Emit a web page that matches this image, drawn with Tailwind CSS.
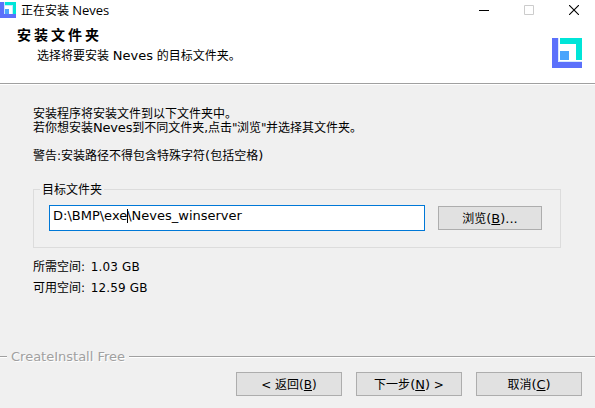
<!DOCTYPE html>
<html lang="zh-CN">
<head>
<meta charset="utf-8">
<title>正在安装 Neves</title>
<script src="https://cdn.jsdelivr.net/npm/@tailwindcss/browser@4"></script>
</head>
<body class="w-[595px] h-[408px] overflow-hidden bg-[#f0f0f0] text-black text-[12px] leading-[14px] font-['DejaVu_Sans','Noto_Sans_CJK_SC',sans-serif] whitespace-nowrap">
<div class="flex flex-col h-[408px]">
  <header class="h-[85px] bg-white border-b border-white flex flex-col">
    <div class="h-[83px] shrink-0">
      <div class="h-5 flex items-start">
        <svg class="w-4 h-4 mt-[2px] shrink-0" viewBox="0 0 16 16"><path fill="#c9e6fb" d="M3 0h10v13H3z"/><path fill="#fff" d="M5 4h7v8H5z"/><path fill="#5b70fb" d="M0 0h4v12h12v4H0z"/><path fill="#00e5d8" d="M5 0h11v12h-3V3H5z"/><path fill="#4ca4fc" d="M5 7h4v5H5z"/></svg>
        <span class="ml-[5px] mt-[3px] font-['Open_Sans','Noto_Sans_CJK_SC',sans-serif]">正在安装 <span class="text-[13px]">Neves</span></span>
        <div class="ml-auto flex mr-[16px] mt-[5px] gap-[35px]">
          <svg class="w-[10px] h-[10px]" viewBox="0 0 10 10"><path d="M0 5.5h10" stroke="#000"/></svg>
          <svg class="w-[10px] h-[10px]" viewBox="0 0 10 10"><path d="M.5.5h9v9h-9z" fill="none" stroke="#ccc"/></svg>
          <svg class="w-[10px] h-[10px]" viewBox="0 0 10 10"><path d="M0 0l10 10M10 0L0 10" stroke="#000" stroke-width="1.1"/></svg>
        </div>
      </div>
      <div class="flex justify-between">
        <div class="pl-[17px] pt-[7px]">
          <h1 class="text-[14px] leading-4 font-bold tracking-[3px]">安装文件夹</h1>
          <p class="pl-5 mt-[6px]">选择将要安装 <span class="text-[13px]">Neves</span> 的目标文件夹。</p>
        </div>
        <svg class="w-[30px] h-[30px] mt-[18px] mr-[13px]" viewBox="0 0 30 30"><path fill="#5b70fb" d="M0 0h6v24h24v6H0z"/><path fill="#00e5d8" d="M8 0h22v22h-6V6H8z"/><path fill="#4ca4fc" d="M8 13h9v9H8z"/><path fill="none" stroke="#d5e8ff" d="M6.5 0v23.5H30"/></svg>
      </div>
    </div>
    <div class="h-px bg-[#a0a0a0]"></div>
  </header>
  <main class="h-[271px] pt-[22px] pl-[33px]">
    <p>安装程序将安装文件到以下文件夹中。</p>
    <p>若你想安装<span class="text-[13px] -tracking-[0.2px]">Neves</span>到不同文件夹,点击<span class="-tracking-[0.6px]">"</span>浏览<span class="-tracking-[0.6px]">"</span>并选择其文件夹。</p>
    <p class="mt-[14px]">警告:安装路径不得包含特殊字符<span class="text-[13px]">(</span>包括空格<span class="text-[13px]">)</span></p>
    <fieldset class="w-[528px] h-[65px] mt-[20px] flex flex-col">
      <div class="flex h-[14px] items-start">
        <div class="w-[7px] h-px mt-[6px] bg-[#dcdcdc]"></div>
        <span class="w-[64px] pl-[2px]">目标文件夹</span>
        <div class="grow h-px mt-[6px] bg-[#dcdcdc]"></div>
      </div>
      <div class="-mt-[8px] h-[59px] border border-t-0 border-[#dcdcdc] flex pt-[16px] pl-[15px] items-start">
        <div class="w-[376px] h-[26px] bg-white border border-[#0078d7] pl-[3px] pt-[3px] flex text-[13px]">D:\BMP\exe<span class="w-px h-[14px] bg-black -mr-px"></span>\Neves_winserver</div>
        <button class="ml-[13px] mt-px w-[104px] h-6 bg-[#e1e1e1] border border-[#adadad] pt-px">浏览<span class="text-[13px]">(<u>B</u>)...</span></button>
      </div>
    </fieldset>
    <p class="mt-[12px]">所需空间<span class="tracking-[0.15px]"><span class="mr-[1.5px]">:</span> 1.03 GB</span></p>
    <p class="mt-[7px]">可用空间<span class="tracking-[0.15px]"><span class="mr-[1.5px]">:</span> 12.59 GB</span></p>
  </main>
  <div class="h-[2px] flex items-center">
    <div class="w-[7px] h-[2px] bg-[#a0a0a0] border-b border-white"></div>
    <span class="w-[122px] pl-[4px] text-[13px] text-[#a0a0a0] [text-shadow:1px_1px_0_#fff]">CreateInstall Free</span>
    <div class="grow h-[2px] bg-[#a0a0a0] border-b border-white"></div>
  </div>
  <footer class="flex gap-[14px] pl-[236px] pt-[14px]">
    <button class="w-[106px] h-6 bg-[#e1e1e1] border border-[#adadad] pt-px">&lt; 返回(<u>B</u>)</button>
    <button class="w-[106px] h-6 bg-[#e1e1e1] border border-[#adadad] pt-px">下一步<span class="text-[13px]">(<u>N</u>)</span> &gt;</button>
    <button class="w-[106px] h-6 bg-[#e1e1e1] border border-[#adadad] pt-px">取消<span class="text-[13px]">(<u>C</u>)</span></button>
  </footer>
</div>
</body>
</html>
